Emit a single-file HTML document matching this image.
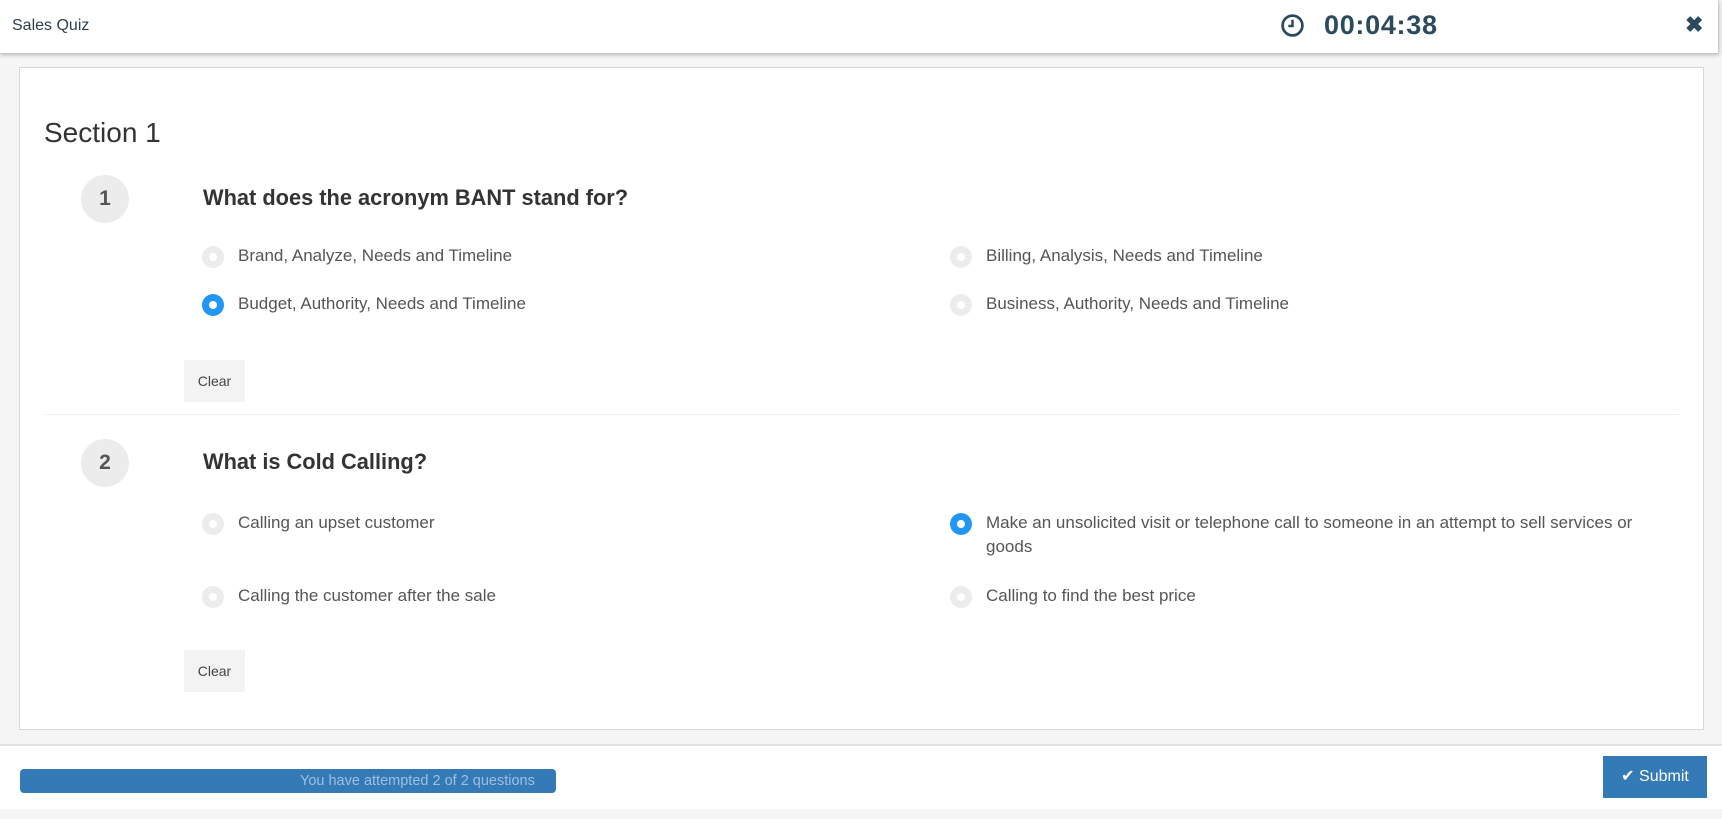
<!DOCTYPE html>
<html><head><meta charset="utf-8"><style>
*{box-sizing:border-box;margin:0;padding:0}
body{width:1722px;height:819px;background:#f5f5f5;font-family:"Liberation Sans",Arial,sans-serif;position:relative;overflow:hidden}
.hdr{position:absolute;left:0;top:0;width:1719px;height:53px;background:#fff;box-shadow:0 2px 4px rgba(0,0,0,.25);border-right:1px solid #ccc}
.abs{position:absolute}
.card{position:absolute;left:19px;top:67px;width:1685px;height:663px;background:#fff;border:1px solid #d8d8d8}
.num{position:absolute;width:48px;height:48px;border-radius:50%;background:#ececec;color:#555;font-weight:bold;font-size:21px;text-align:center;line-height:48px}
.q{position:absolute;font-weight:bold;font-size:21.8px;color:#333}
.opt{position:absolute;font-size:17px;color:#555;line-height:24px}
.r{position:absolute;width:22px;height:22px;border-radius:50%;background:#ececec}
.r::after{content:"";position:absolute;left:7px;top:7px;width:8px;height:8px;border-radius:50%;background:#fff}
.r.on{background:#2196f3}
.clr{position:absolute;width:61px;height:42px;background:#f3f3f3;font-size:14px;color:#444;text-align:center;line-height:42px}
</style></head><body>
<div class="hdr">
<div class="abs" style="left:12px;top:17px;font-size:16px;color:#2c3e50">Sales Quiz</div>
<svg class="abs" style="left:1280px;top:13px" width="25" height="25" viewBox="0 0 24 24"><circle cx="12" cy="12" r="9.5" fill="none" stroke="#2c4a5e" stroke-width="2.6"/><path d="M12 6.5V12.5H8" fill="none" stroke="#2c4a5e" stroke-width="2.4"/></svg>
<div class="abs" style="left:1324px;top:10px;font-size:27px;font-weight:bold;color:#2c4a5e;letter-spacing:.7px">00:04:38</div>
<div class="abs" style="left:1685px;top:12px;font-size:22px;font-weight:bold;color:#2c4a5e">✖</div>
</div>
<div class="card">
<div class="abs" style="left:24px;top:49px;font-size:28px;color:#333">Section 1</div>
<div class="num" style="left:61px;top:107px">1</div>
<div class="q" style="left:183px;top:117px">What does the acronym BANT stand for?</div>
<div class="r" style="left:182px;top:178px"></div><div class="opt" style="left:218px;top:176px">Brand, Analyze, Needs and Timeline</div>
<div class="r on" style="left:182px;top:226px"></div><div class="opt" style="left:218px;top:224px">Budget, Authority, Needs and Timeline</div>
<div class="r" style="left:930px;top:178px"></div><div class="opt" style="left:966px;top:176px">Billing, Analysis, Needs and Timeline</div>
<div class="r" style="left:930px;top:226px"></div><div class="opt" style="left:966px;top:224px">Business, Authority, Needs and Timeline</div>
<div class="clr" style="left:164px;top:292px">Clear</div>
<div class="abs" style="left:25px;top:346px;width:1634px;height:1px;background:#eee"></div>
<div class="num" style="left:61px;top:371px">2</div>
<div class="q" style="left:183px;top:381px">What is Cold Calling?</div>
<div class="r" style="left:182px;top:445px"></div><div class="opt" style="left:218px;top:443px">Calling an upset customer</div>
<div class="r" style="left:182px;top:518px"></div><div class="opt" style="left:218px;top:516px">Calling the customer after the sale</div>
<div class="r on" style="left:930px;top:445px"></div><div class="opt" style="left:966px;top:443px;width:680px">Make an unsolicited visit or telephone call to someone in an attempt to sell services or goods</div>
<div class="r" style="left:930px;top:518px"></div><div class="opt" style="left:966px;top:516px">Calling to find the best price</div>
<div class="clr" style="left:164px;top:582px">Clear</div>
</div>
<div class="abs" style="left:0;top:744px;width:1722px;height:65px;background:#fff;border-top:2px solid #e3e3e3"></div>
<div class="abs" style="left:20px;top:769px;width:536px;height:24px;background:#337ab7;border-radius:4px;color:#9fbfdf;font-size:14.5px;line-height:24px;padding-left:280px">You have attempted 2 of 2 questions</div>
<div class="abs" style="left:1603px;top:756px;width:104px;height:42px;background:#337ab7;color:#fff;font-size:16px;line-height:42px;text-align:center">✔ Submit</div>
</body></html>
